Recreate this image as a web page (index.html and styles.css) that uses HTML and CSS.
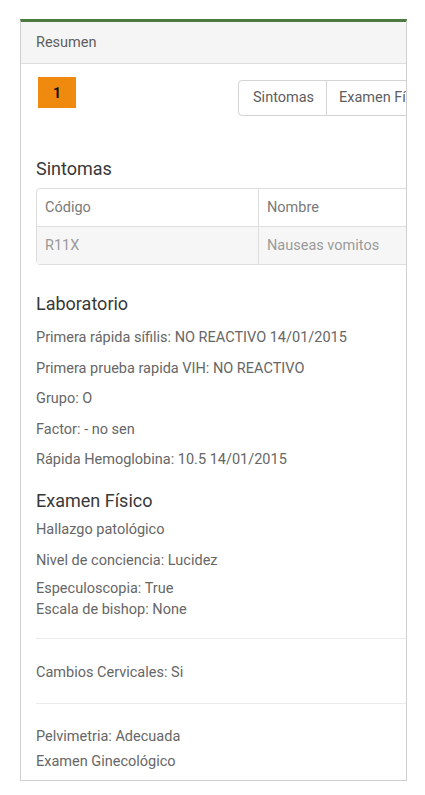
FILE: index.html
```html
<!DOCTYPE html>
<html lang="es">
<head>
<meta charset="utf-8">
<link rel="stylesheet" href="styles.css">
</head>
<body>
<div class="panel">
  <div class="panel-heading">Resumen</div>
  <div class="panel-body">
    <div class="top-row">
      <span class="badge">1</span>
      <div class="btn-group">
        <span class="btn">Sintomas</span>
        <span class="btn">Examen Físico</span>
        <span class="btn">Laboratorio</span>
      </div>
    </div>

    <h4 class="title t-sintomas">Sintomas</h4>
    <table class="tbl">
      <tr class="head"><td class="c1">Código</td><td>Nombre</td></tr>
      <tr class="row"><td class="c1">R11X</td><td>Nauseas vomitos</td></tr>
    </table>

    <h4 class="title t-lab">Laboratorio</h4>
    <p class="line first">Primera rápida sífilis: NO REACTIVO 14/01/2015</p>
    <p class="line">Primera prueba rapida VIH: NO REACTIVO</p>
    <p class="line">Grupo: O</p>
    <p class="line">Factor: - no sen</p>
    <p class="line">Rápida Hemoglobina: 10.5 14/01/2015</p>

    <h4 class="title t-exam">Examen Físico</h4>
    <p class="line first-exam">Hallazgo patológico</p>
    <p class="line">Nivel de conciencia: Lucidez</p>
    <p class="line multi">Especuloscopia: True<br>Escala de bishop: None</p>
    <hr class="sep">
    <p class="line after-sep">Cambios Cervicales: Si</p>
    <hr class="sep sep2">
    <p class="line after-sep2">Pelvimetria: Adecuada</p>
    <p class="line last">Examen Ginecológico</p>
  </div>
</div>
</body>
</html>
```
FILE: styles.css
```css
html, body {
  margin: 0;
  padding: 0;
  background: #fff;
}
body {
  font-family: Roboto, "Liberation Sans", sans-serif;
  color: #666;
}
.panel {
  margin: 19px 0 0 20px;
  width: 387px;
  box-sizing: border-box;
  border: 1px solid #cfcfcf;
  border-top: 3px solid #4b7a40;
  overflow: hidden;
}
.panel-heading {
  width: 600px;
  height: 41px;
  line-height: 42px;
  padding-left: 15px;
  background: #f5f5f5;
  border-bottom: 1px solid #dedede;
  font-size: 14.5px;
  color: #5e5e5e;
}
.panel-body {
  width: 600px;
  padding: 13px 15px 8px 15px;
}
.top-row {
  display: flex;
  align-items: flex-start;
}
.badge {
  margin-left: 2px;
  width: 38px;
  height: 31px;
  background: #ef8a0e;
  color: #111;
  font-weight: bold;
  font-size: 14px;
  display: flex;
  align-items: center;
  justify-content: center;
}
.btn-group {
  margin-left: 162px;
  margin-top: 3px;
  display: flex;
  border: 1px solid #d4d4d4;
  border-radius: 4px;
  height: 34px;
}
.btn {
  padding: 0 12px;
  line-height: 34px;
  font-size: 14.5px;
  color: #5e5e5e;
  border-left: 1px solid #d4d4d4;
}
.btn:first-child {
  border-left: none;
  width: 63px;
  padding-left: 14px;
  padding-right: 10px;
}
.title {
  font-weight: normal;
  font-size: 18px;
  line-height: 20px;
  color: #383838;
  margin: 0;
}
.t-sintomas {
  margin-top: 43px;
  margin-bottom: 9px;
}
.tbl {
  width: 520px;
  border-collapse: separate;
  border-spacing: 0;
  border: 1px solid #dedede;
  border-radius: 4px;
  font-size: 14.5px;
}
.tbl td {
  padding: 0 8px;
  height: 37px;
}
.tbl .c1 {
  width: 205px;
  border-right: 1px solid #dedede;
}
.tbl .head td {
  color: #7a7a7a;
  border-bottom: 1px solid #dedede;
}
.tbl .row td {
  color: #9a9a9a;
  background: #f6f6f6;
}
.t-lab {
  margin-top: 29px;
}
.line {
  margin: 0;
  font-size: 14.5px;
  line-height: 20px;
  color: #666;
  margin-top: 10.5px;
}
.line.first {
  margin-top: 14px;
}
.t-exam {
  margin-top: 21px;
}
.line.first-exam {
  margin-top: 9px;
}
.line.multi {
  margin-top: 7px;
  line-height: 21px;
}
.sep {
  border: 0;
  border-top: 1px solid #eaeaea;
  margin: 18px 0 0 0;
  width: 560px;
}
.line.after-sep {
  margin-top: 24px;
}
.sep2 {
  margin-top: 20px;
}
.line.after-sep2 {
  margin-top: 23px;
}
.line.last {
  margin-top: 5px;
}
```
